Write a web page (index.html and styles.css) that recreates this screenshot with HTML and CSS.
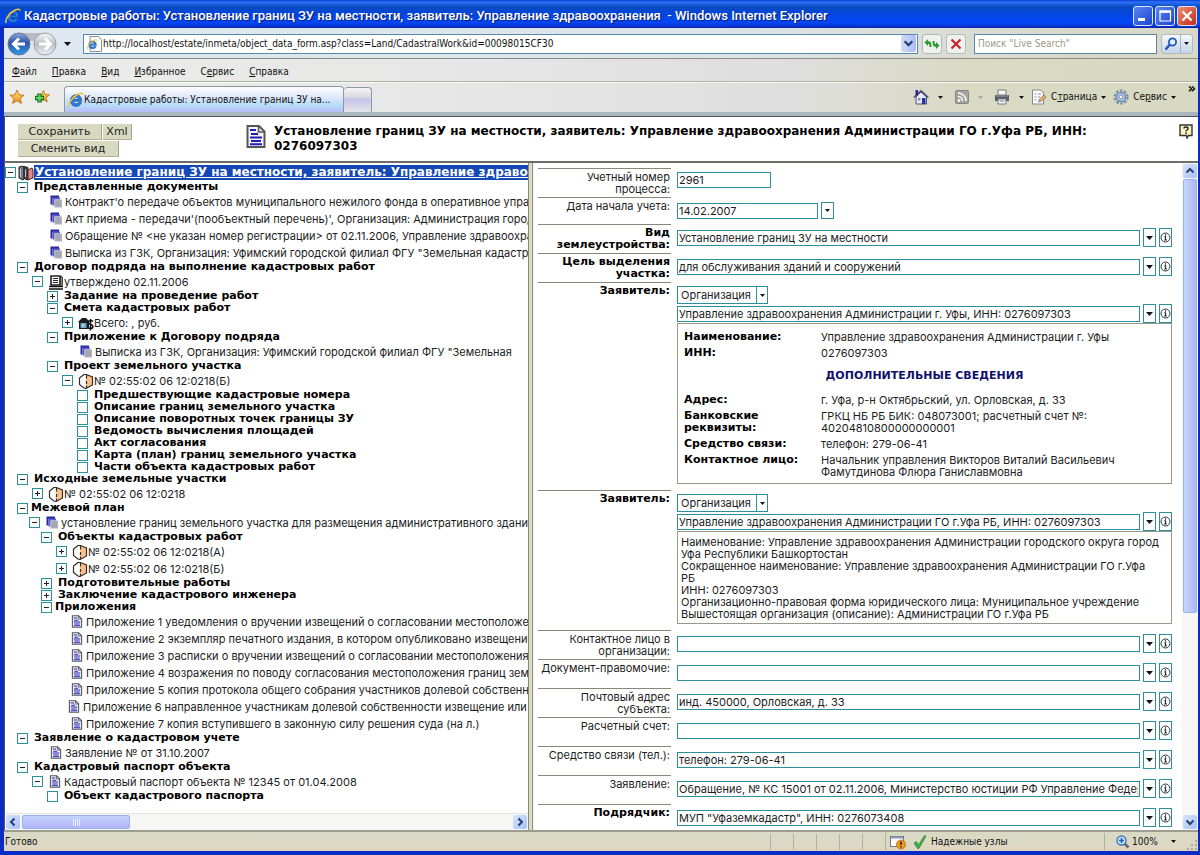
FILE: index.html
```html
<!DOCTYPE html>
<html lang="ru">
<head>
<meta charset="utf-8">
<title>Кадастровые работы</title>
<link rel="stylesheet" href="styles.css">
</head>
<body>
<svg class="defs" aria-hidden="true">
  <defs>
    <linearGradient id="gBlue" x1="0" y1="0" x2="0" y2="1"><stop offset="0" stop-color="#8fa6d8"/><stop offset=".45" stop-color="#2c54a8"/><stop offset="1" stop-color="#2f9bea"/></linearGradient>
    <linearGradient id="gGrey" x1="0" y1="0" x2="0" y2="1"><stop offset="0" stop-color="#fafafa"/><stop offset=".5" stop-color="#b9bcc2"/><stop offset="1" stop-color="#f0f2f6"/></linearGradient>
    <linearGradient id="gStar" x1="0" y1="0" x2="0" y2="1"><stop offset="0" stop-color="#ffe36a"/><stop offset="1" stop-color="#f08a1c"/></linearGradient>
  </defs>
  <symbol id="ie" viewBox="0 0 16 16"><path d="M13.6 9.2H5.4c.1 1.700 1.200 2.600 2.800 2.600 1.100 0 1.900-.4 2.400-1.200h2.800c-.8 2.400-2.700 3.700-5.300 3.700-3.400 0-5.700-2.300-5.700-5.700s2.400-5.800 5.700-5.800c3.500 0 5.700 2.400 5.500 6.400zM5.500 7.200h5.200C10.500 5.700 9.500 5 8.100 5S5.700 5.800 5.500 7.200z" fill="#2a84dc" stroke="#164f9c" stroke-width=".8"/><path d="M1.300 15C-.4 12.500 3.500 6 8.500 3c3.500-2.200 6.500-2.500 6.300-.3" fill="none" stroke="#f3c33a" stroke-width="1.500"/></symbol>
  <symbol id="docs" viewBox="0 0 12 12"><path d="M.5 0H9v2.500H2.500V9H.5z" fill="#2a2a9e"/><path d="M2.500 2H10v2H4.500v6h-2z" fill="#5a5ad0"/><rect x="4.500" y="4" width="7.500" height="8" fill="#b4b4c4"/><rect x="5.500" y="5" width="5.500" height="6" fill="#a6a6ae"/></symbol>
  <symbol id="page" viewBox="0 0 20 24"><path d="M1.500 1.500H13L18.500 7v15.500h-17z" fill="#f2f2fa" stroke="#55555c" stroke-width="2"/><path d="M12.500 1v6.500H19" fill="none" stroke="#55555c" stroke-width="1.600"/><path d="M4 5.500h6M5 9.500h7M4 13h12M5 16.500h10M4 19.800h12" stroke="#2020a8" stroke-width="1.900"/></symbol>
  <symbol id="parcel" viewBox="0 0 16 16"><path d="M8 1.500L14 4v8l-6 3z" fill="#f8c08a"/><path d="M6 1.500L1.500 5v6.500L6 15l2 .5L14.500 12V4L8.500 1.500z" fill="none" stroke="#3a2a28" stroke-width="1.200"/><path d="M8.500 2v3.500M8.500 8v3M8.500 12.500V15" stroke="#3a2a28" stroke-width="1.200"/></symbol>
  <symbol id="minus" viewBox="0 0 11 11"><rect x=".5" y=".5" width="10" height="10" fill="#fff" stroke="#2c8f9c"/><path d="M3 5.500h5" stroke="#222"/></symbol>
  <symbol id="plus" viewBox="0 0 11 11"><rect x=".5" y=".5" width="10" height="10" fill="#fff" stroke="#2c8f9c"/><path d="M3 5.500h5M5.500 3v5" stroke="#222"/></symbol>
  <symbol id="empty" viewBox="0 0 11 11"><rect x=".5" y=".5" width="10" height="10" fill="#fff" stroke="#2c8f9c"/></symbol>
  <symbol id="tri" viewBox="0 0 7 4"><path d="M0 0h7L3.500 4z" fill="#111"/></symbol>
  <symbol id="info" viewBox="0 0 11 11"><circle cx="5.500" cy="5.500" r="4.500" fill="#fff" stroke="#333"/><path d="M5.500 2.300v1.400M4.400 4.900h1.200v3M4.200 8h2.700" fill="none" stroke="#222" stroke-width="1.100"/></symbol>
</svg>

<div class="window">
  <header class="titlebar">
    <svg class="i16"><use href="#ie"/></svg>
    <h1>Кадастровые работы: Установление границ ЗУ на местности, заявитель: Управление здравоохранения&nbsp; - Windows Internet Explorer</h1>
    <div class="winbtns">
      <button class="wb" aria-label="Свернуть"><svg viewBox="0 0 18 18"><path d="M4 12.500h7" stroke="#fff" stroke-width="3"/></svg></button>
      <button class="wb" aria-label="Развернуть"><svg viewBox="0 0 18 18"><path d="M4 5h10.500v9H4z" fill="none" stroke="#fff" stroke-width="1.200"/><path d="M3.500 4.500h11.500" stroke="#fff" stroke-width="2.500"/></svg></button>
      <button class="wb close" aria-label="Закрыть"><svg viewBox="0 0 18 18"><path d="M4.500 4.500l9 9M13.500 4.500l-9 9" stroke="#fff" stroke-width="2.400"/></svg></button>
    </div>
  </header>

  <div class="frame">
    <div class="chrome">
      <div class="navbar">
        <svg class="backfwd" viewBox="0 0 52 26"><path d="M12 2h28v8H12z" fill="#b8bcc6"/><circle cx="12" cy="13" r="11" fill="url(#gBlue)" stroke="#6b7894"/><circle cx="38" cy="13" r="11" fill="url(#gGrey)" stroke="#9a9ea8"/><path d="M12 7.500L6.500 13l5.500 5.500M7 13h11" fill="none" stroke="#fff" stroke-width="3"/><path d="M38 7.500l5.500 5.500-5.500 5.500M43 13H32" fill="none" stroke="#fff" stroke-width="3"/></svg>
        <svg class="tri"><use href="#tri"/></svg>
        <div class="address">
          <svg class="i16" viewBox="0 0 16 16"><path d="M3 .5h8.500L14.500 4v11.500H3z" fill="#fff" stroke="#8a8f9c"/><use href="#ie" x="0" y="3" width="11" height="11"/></svg>
          <input type="text" aria-label="Адрес" value="http://localhost/estate/inmeta/object_data_form.asp?class=Land/CadastralWork&amp;id=00098015CF30">
          <button class="drop" aria-label="Список адресов"><svg viewBox="0 0 10 10"><path d="M1.500 3L5 6.500 8.500 3" fill="none" stroke="#23407a" stroke-width="2"/></svg></button>
        </div>
        <button class="sq" aria-label="Обновить"><svg viewBox="0 0 16 16"><path d="M.5 6.500L4 3v2.200C6.500 5 7.500 6.500 7.500 11h-2C5.500 8.500 5.300 7.800 4 7.800V10zM15.500 9.500L12 13v-2.200C9.500 11 8.500 9.500 8.500 5h2c0 2.500.2 3.200 1.500 3.200V6z" fill="#2c9a34"/></svg></button>
        <button class="sq" aria-label="Остановить"><svg viewBox="0 0 16 16"><path d="M3.500 3.500l9 9M12.500 3.500l-9 9" stroke="#c8262c" stroke-width="2.200"/></svg></button>
        <input class="search" type="text" aria-label="Поиск" placeholder="Поиск &quot;Live Search&quot;">
        <div class="find">
          <button aria-label="Найти"><svg class="i14" viewBox="0 0 14 14"><circle cx="8.500" cy="5" r="3.600" fill="#dff0ff" stroke="#2456b8" stroke-width="1.800"/><path d="M6 7.500L1.500 12.500" stroke="#2456b8" stroke-width="2.600"/></svg></button>
          <button class="more" aria-label="Параметры поиска"><svg class="tri5"><use href="#tri"/></svg></button>
        </div>
      </div>
      <nav class="menubar">
        <a href="#"><u>Ф</u>айл</a><a href="#"><u>П</u>равка</a><a href="#"><u>В</u>ид</a><a href="#"><u>И</u>збранное</a><a href="#">С<u>е</u>рвис</a><a href="#"><u>С</u>правка</a>
      </nav>
      <div class="tabbar">
        <svg class="i16 fav" viewBox="0 0 16 16"><path d="M8 1l2 4.800 5 .4-3.800 3.300 1.200 5L8 11.800 3.600 14.500l1.200-5L1 6.200l5-.4z" fill="url(#gStar)" stroke="#b56a14" stroke-width=".8"/></svg>
        <svg class="i16 fav2" viewBox="0 0 16 16"><path d="M9.500 1.500l1.700 4 4.300.3-3.300 2.800 1 4.300-3.700-2.300L5.800 13l1-4.400L3.600 5.800l4.200-.3z" fill="url(#gStar)" stroke="#b56a14" stroke-width=".8"/><path d="M5.500 4.500v9M1 9h9" stroke="#187020" stroke-width="4.400"/><path d="M5.500 5.500v7M2 9h7" stroke="#66d35a" stroke-width="2.200"/></svg>
        <div class="tab"><svg class="i16"><use href="#ie"/></svg><span>Кадастровые работы: Установление границ ЗУ на...</span></div>
        <div class="newtab"></div>
        <div class="cmds">
          <button class="g1" aria-label="Домой"><svg class="i16" viewBox="0 0 16 16"><path d="M3 8v7h10.500V8L8 3z" fill="#e8e8f4" stroke="#50506c"/><path d="M.8 8.500L8 1.800l7.300 6.700" fill="none" stroke="#4a4a80" stroke-width="1.600"/><path d="M2.500 1h2.500v4l-2.500 2z" fill="#26268a"/><path d="M9 9h3.500v6H9z" fill="#2430a8"/><path d="M5 9h2.500v2.500H5z" fill="#8888a0"/></svg><svg class="tri5"><use href="#tri"/></svg></button>
          <button class="g2" aria-label="Веб-каналы"><svg class="i14" viewBox="0 0 14 14"><rect x=".5" y=".5" width="13" height="13" rx="1.500" fill="#a4a4a0" stroke="#868682"/><circle cx="4" cy="10.500" r="1.300" fill="#fff"/><path d="M3 6.500a4.500 4.500 0 0 1 4.500 4.500M3 3a8 8 0 0 1 8 8" fill="none" stroke="#fff" stroke-width="1.400"/></svg><svg class="tri5 dim"><use href="#tri"/></svg></button>
          <button class="g3" aria-label="Печать"><svg class="i16" viewBox="0 0 16 16"><path d="M4 1h8v5H4z" fill="#fafafa" stroke="#777"/><path d="M1 6h14v6H1z" fill="#5c5e64"/><path d="M2 7h12" stroke="#9a9ca4"/><path d="M4 10h8v5H4z" fill="#fff" stroke="#777"/><path d="M5.500 12h5" stroke="#4878c0"/></svg><svg class="tri5"><use href="#tri"/></svg></button>
          <button class="g4"><svg class="i16" viewBox="0 0 16 16"><path d="M1.500 1h8l3 3v11h-11z" fill="#fff" stroke="#85858c"/><path d="M3.500 5h2M3.500 8h2M3.500 11h2M7 5h3M7 8h2" stroke="#7888b0"/><path d="M7.500 13l1-3 4.500-4 2 2-4.500 4z" fill="#f0b070" stroke="#7a5a48" stroke-width=".7"/></svg><span>С<u>т</u>раница</span><svg class="tri5"><use href="#tri"/></svg></button>
          <button class="g5"><svg class="i16" viewBox="0 0 16 16"><circle cx="8" cy="8" r="6.500" fill="none" stroke="#7c90ac" stroke-width="2.200" stroke-dasharray="2.600 1.500"/><circle cx="8" cy="8" r="4.500" fill="#b4d4f4" stroke="#6e86a8" stroke-width="1.400"/><circle cx="8" cy="8" r="2" fill="#f2f4f0" stroke="#6e86a8"/></svg><span>Се<u>р</u>вис</span><svg class="tri5"><use href="#tri"/></svg></button>
          <b class="chev">»</b>
        </div>
      </div>
    </div>

    <div class="pagehead">
      <div class="actions"><div class="arow"><button class="w1">Сохранить</button><button class="w2">Xml</button></div><div class="arow"><button class="w3">Сменить вид</button></div></div>
      <svg class="bigdoc"><use href="#page"/></svg>
      <h2>Установление границ ЗУ на местности, заявитель: Управление здравоохранения Администрации ГО г.Уфа РБ, ИНН: 0276097303</h2>
      <svg class="i14 help" viewBox="0 0 14 15"><path d="M1 1h12v10.500H9.500L8 14l-.5-2.500H1z" fill="#fbf6c0" stroke="#333" stroke-width="1.400"/><path d="M5 4.500C5 2.500 9 2.500 9 4.500 9 6 7 6 7 7.500M7 8.600v1.500" fill="none" stroke="#222" stroke-width="1.500"/></svg>
    </div>

    <div class="panes">
      <section class="left">
        <div class="tree">
          <div class="row root"><svg class="bx"><use href="#minus"/></svg><svg class="i16" viewBox="0 0 16 16"><path d="M1 2l4-1 1 1v12l-1 1-4-2z" fill="#7a7a84" stroke="#222"/><path d="M6 1.500l4 1V15l-4-1.500z" fill="#44444e" stroke="#222"/><path d="M10 5l4-2 1 2v8l-5 2z" fill="#e88a84" stroke="#4a2222"/><path d="M2.500 4v8M7.500 4.500V12" stroke="#c8c8d4"/></svg><a class="sel" href="#">Установление границ ЗУ на местности, заявитель: Управление здравоохранения</a></div>
          <ul class="first">
            <li><div class="row b"><svg class="bx"><use href="#minus"/></svg><span>Представленные документы</span></div>
              <ul>
                <li class="row t"><svg class="ic leaf"><use href="#docs"/></svg><span>Контракт'о передаче объектов муниципального нежилого фонда в оперативное управление</span></li>
                <li class="row t"><svg class="ic leaf"><use href="#docs"/></svg><span>Акт приема - передачи'(пообъектный перечень)', Организация: Администрация города</span></li>
                <li class="row t"><svg class="ic leaf"><use href="#docs"/></svg><span>Обращение № &lt;не указан номер регистрации&gt; от 02.11.2006, Управление здравоохранения</span></li>
                <li class="row t"><svg class="ic leaf"><use href="#docs"/></svg><span>Выписка из ГЗК, Организация: Уфимский городской филиал ФГУ "Земельная кадастровая</span></li>
              </ul></li>
            <li><div class="row b"><svg class="bx"><use href="#minus"/></svg><span>Договор подряда на выполнение кадастровых работ</span></div>
              <ul>
                <li><div class="row t"><svg class="bx"><use href="#minus"/></svg><svg class="i16" viewBox="0 0 16 16"><path d="M3 2h9v9H3z" fill="#fff" stroke="#222" stroke-width="1.600"/><path d="M5 4.500h5M5 6.500h5M5 8.500h5" stroke="#222"/><path d="M1 12.500h14M1 15h14" stroke="#111" stroke-width="1.500"/><path d="M13 2l1.500 1v8L13 12z" fill="#d8c880" stroke="#222" stroke-width=".8"/></svg><span>утверждено 02.11.2006</span></div>
                  <ul>
                    <li class="row b"><svg class="bx"><use href="#plus"/></svg><span>Задание на проведение работ</span></li>
                    <li><div class="row b"><svg class="bx"><use href="#minus"/></svg><span>Смета кадастровых работ</span></div>
                      <ul><li class="row t"><svg class="bx"><use href="#plus"/></svg><svg class="i16" viewBox="0 0 16 16"><path d="M0 7l4-4h4l3 3v8H1V7z" fill="#1c1c24"/><path d="M2.500 8h6v5h-6z" fill="#6ea8c8"/><path d="M5 9v3" stroke="#fff"/><path d="M15 6.500c-1.500-1.500-5-1-5 1s5 1.500 5 4-4 2.500-5.500 1M12.500 4v11.500" fill="none" stroke="#111" stroke-width="1.500"/></svg><span>Всего: , руб.</span></li></ul></li>
                    <li><div class="row b"><svg class="bx"><use href="#minus"/></svg><span>Приложение к Договору подряда</span></div>
                      <ul><li class="row t"><svg class="ic leaf"><use href="#docs"/></svg><span>Выписка из ГЗК, Организация: Уфимский городской филиал ФГУ "Земельная</span></li></ul></li>
                    <li><div class="row b"><svg class="bx"><use href="#minus"/></svg><span>Проект земельного участка</span></div>
                      <ul><li><div class="row t"><svg class="bx"><use href="#minus"/></svg><svg class="i16"><use href="#parcel"/></svg><span>№ 02:55:02 06 12:0218(Б)</span></div>
                        <ul>
                          <li class="row b"><svg class="bx"><use href="#empty"/></svg><span>Предшествующие кадастровые номера</span></li>
                          <li class="row b"><svg class="bx"><use href="#empty"/></svg><span>Описание границ земельного участка</span></li>
                          <li class="row b"><svg class="bx"><use href="#empty"/></svg><span>Описание поворотных точек границы ЗУ</span></li>
                          <li class="row b"><svg class="bx"><use href="#empty"/></svg><span>Ведомость вычисления площадей</span></li>
                          <li class="row b"><svg class="bx"><use href="#empty"/></svg><span>Акт согласования</span></li>
                          <li class="row b"><svg class="bx"><use href="#empty"/></svg><span>Карта (план) границ земельного участка</span></li>
                          <li class="row b"><svg class="bx"><use href="#empty"/></svg><span>Части объекта кадастровых работ</span></li>
                        </ul></li></ul></li>
                  </ul></li>
              </ul></li>
            <li><div class="row b"><svg class="bx"><use href="#minus"/></svg><span>Исходные земельные участки</span></div>
              <ul><li class="row t"><svg class="bx"><use href="#plus"/></svg><svg class="i16"><use href="#parcel"/></svg><span>№ 02:55:02 06 12:0218</span></li></ul></li>
            <li><div class="row b near"><svg class="bx"><use href="#minus"/></svg><span>Межевой план</span></div>
              <ul class="tight">
                <li><div class="row t"><svg class="bx"><use href="#minus"/></svg><svg class="ic"><use href="#docs"/></svg><span>установление границ земельного участка для размещения административного здания</span></div>
                  <ul class="tight">
                    <li><div class="row b"><svg class="bx"><use href="#minus"/></svg><span>Объекты кадастровых работ</span></div>
                      <ul>
                        <li class="row t"><svg class="bx"><use href="#plus"/></svg><svg class="i16"><use href="#parcel"/></svg><span>№ 02:55:02 06 12:0218(А)</span></li>
                        <li class="row t"><svg class="bx"><use href="#plus"/></svg><svg class="i16"><use href="#parcel"/></svg><span>№ 02:55:02 06 12:0218(Б)</span></li>
                      </ul></li>
                    <li class="row b"><svg class="bx"><use href="#plus"/></svg><span>Подготовительные работы</span></li>
                    <li class="row b"><svg class="bx"><use href="#plus"/></svg><span>Заключение кадастрового инженера</span></li>
                    <li><div class="row b near"><svg class="bx"><use href="#minus"/></svg><span>Приложения</span></div>
                      <ul class="tight">
                        <li class="row t"><svg class="ic leaf"><use href="#page"/></svg><span>Приложение 1 уведомления о вручении извещений о согласовании местоположения</span></li>
                        <li class="row t"><svg class="ic leaf"><use href="#page"/></svg><span>Приложение 2 экземпляр печатного издания, в котором опубликовано извещение</span></li>
                        <li class="row t"><svg class="ic leaf"><use href="#page"/></svg><span>Приложение 3 расписки о вручении извещений о согласовании местоположения</span></li>
                        <li class="row t"><svg class="ic leaf"><use href="#page"/></svg><span>Приложение 4 возражения по поводу согласования местоположения границ земельного</span></li>
                        <li class="row t"><svg class="ic leaf"><use href="#page"/></svg><span>Приложение 5 копия протокола общего собрания участников долевой собственности</span></li>
                        <li class="row t out"><svg class="ic leaf"><use href="#page"/></svg><span>Приложение 6 направленное участникам долевой собственности извещение или</span></li>
                        <li class="row t"><svg class="ic leaf"><use href="#page"/></svg><span>Приложение 7 копия вступившего в законную силу решения суда (на л.)</span></li>
                      </ul></li>
                  </ul></li>
              </ul></li>
            <li><div class="row b"><svg class="bx"><use href="#minus"/></svg><span>Заявление о кадастровом учете</span></div>
              <ul><li class="row t"><svg class="ic leaf"><use href="#page"/></svg><span>Заявление № от 31.10.2007</span></li></ul></li>
            <li><div class="row b"><svg class="bx"><use href="#minus"/></svg><span>Кадастровый паспорт объекта</span></div>
              <ul><li><div class="row t"><svg class="bx"><use href="#minus"/></svg><svg class="ic"><use href="#page"/></svg><span>Кадастровый паспорт объекта № 12345 от 01.04.2008</span></div>
                <ul><li class="row b"><svg class="bx"><use href="#empty"/></svg><span>Объект кадастрового паспорта</span></li></ul></li></ul></li>
          </ul>
        </div>
        <div class="hscroll">
          <button aria-label="Влево"><svg viewBox="0 0 10 10"><path d="M6.500 1.500L3 5l3.500 3.500" fill="none" stroke="#23407a" stroke-width="2"/></svg></button>
          <div class="hthumb"><i></i><i></i><i></i><i></i></div>
          <div class="space"></div>
          <button aria-label="Вправо"><svg viewBox="0 0 10 10"><path d="M3.500 1.500L7 5 3.500 8.500" fill="none" stroke="#23407a" stroke-width="2"/></svg></button>
        </div>
      </section>
      <div class="splitter"></div>
      <section class="right">
        <form class="form">
          <div class="frow"><label for="f1">Учетный номер процесса:</label><div class="val"><input class="num" id="f1" value="2961"></div></div>
          <div class="frow short"><label for="f2">Дата начала учета:</label><div class="val line"><input class="date" id="f2" value="14.02.2007"><button type="button" class="cb sm" aria-label="Календарь"><svg class="tri5"><use href="#tri"/></svg></button></div></div>
          <div class="frow"><label class="req" for="f3">Вид землеустройства:</label><div class="val line"><input id="f3" value="Установление границ ЗУ на местности"><button type="button" class="cb" aria-label="Выбрать"><svg class="tri"><use href="#tri"/></svg></button><button type="button" class="cb" aria-label="Сведения"><svg class="inf"><use href="#info"/></svg></button></div></div>
          <div class="frow"><label class="req" for="f4">Цель выделения участка:</label><div class="val line"><input id="f4" value="для обслуживания зданий и сооружений"><button type="button" class="cb" aria-label="Выбрать"><svg class="tri"><use href="#tri"/></svg></button><button type="button" class="cb" aria-label="Сведения"><svg class="inf"><use href="#info"/></svg></button></div></div>
          <div class="frow"><label class="req" for="f5">Заявитель:</label><div class="val">
            <div class="pick"><select id="f5"><option>Организация</option></select><span><svg class="tri5"><use href="#tri"/></svg></span></div>
            <div class="line"><input aria-label="Организация" value="Управление здравоохранения Администрации г. Уфы, ИНН: 0276097303"><button type="button" class="cb" aria-label="Выбрать"><svg class="tri"><use href="#tri"/></svg></button><button type="button" class="cb" aria-label="Сведения"><svg class="inf"><use href="#info"/></svg></button></div>
            <div class="card"><table>
              <tr><th>Наименование:</th><td>Управление здравоохранения Администрации г. Уфы</td></tr>
              <tr><th>ИНН:</th><td>0276097303</td></tr>
              <tr><td class="sub" colspan="2">ДОПОЛНИТЕЛЬНЫЕ СВЕДЕНИЯ</td></tr>
              <tr><th>Адрес:</th><td>г. Уфа, р-н Октябрьский, ул. Орловская, д. 33</td></tr>
              <tr><th>Банковские<br>реквизиты:</th><td>ГРКЦ НБ РБ БИК: 048073001; расчетный счет №:<br>40204810800000000001</td></tr>
              <tr><th>Средство связи:</th><td>телефон: 279-06-41</td></tr>
              <tr><th>Контактное лицо:</th><td>Начальник управления Викторов Виталий Васильевич<br>Фамутдинова Флюра Ганиславмовна</td></tr>
            </table></div></div></div>
          <div class="frow"><label class="req" for="f6">Заявитель:</label><div class="val">
            <div class="pick"><select id="f6"><option>Организация</option></select><span><svg class="tri5"><use href="#tri"/></svg></span></div>
            <div class="line"><input aria-label="Организация" value="Управление здравоохранения Администрации ГО г.Уфа РБ, ИНН: 0276097303"><button type="button" class="cb" aria-label="Выбрать"><svg class="tri"><use href="#tri"/></svg></button><button type="button" class="cb" aria-label="Сведения"><svg class="inf"><use href="#info"/></svg></button></div>
            <div class="card text">Наименование: Управление здравоохранения Администрации городского округа город<br>Уфа Республики Башкортостан<br>Сокращенное наименование: Управление здравоохранения Администрации ГО г.Уфа<br>РБ<br>ИНН: 0276097303<br>Организационно-правовая форма юридического лица: Муниципальное учреждение<br>Вышестоящая организация (описание): Администрации ГО г.Уфа РБ</div></div></div>
          <div class="frow"><label for="f7">Контактное лицо в организации:</label><div class="val line"><input id="f7"><button type="button" class="cb" aria-label="Выбрать"><svg class="tri"><use href="#tri"/></svg></button><button type="button" class="cb" aria-label="Сведения"><svg class="inf"><use href="#info"/></svg></button></div></div>
          <div class="frow"><label for="f8">Документ-правомочие:</label><div class="val line"><input id="f8"><button type="button" class="cb" aria-label="Выбрать"><svg class="tri"><use href="#tri"/></svg></button><button type="button" class="cb" aria-label="Сведения"><svg class="inf"><use href="#info"/></svg></button></div></div>
          <div class="frow"><label for="f9">Почтовый адрес субъекта:</label><div class="val line"><input id="f9" value="инд. 450000, Орловская, д. 33"><button type="button" class="cb" aria-label="Выбрать"><svg class="tri"><use href="#tri"/></svg></button><button type="button" class="cb" aria-label="Сведения"><svg class="inf"><use href="#info"/></svg></button></div></div>
          <div class="frow"><label for="f10">Расчетный счет:</label><div class="val line"><input id="f10"><button type="button" class="cb" aria-label="Выбрать"><svg class="tri"><use href="#tri"/></svg></button><button type="button" class="cb" aria-label="Сведения"><svg class="inf"><use href="#info"/></svg></button></div></div>
          <div class="frow"><label for="f11">Средство связи (тел.):</label><div class="val line"><input id="f11" value="телефон: 279-06-41"><button type="button" class="cb" aria-label="Выбрать"><svg class="tri"><use href="#tri"/></svg></button><button type="button" class="cb" aria-label="Сведения"><svg class="inf"><use href="#info"/></svg></button></div></div>
          <div class="frow"><label for="f12">Заявление:</label><div class="val line"><input id="f12" value="Обращение, № КС 15001 от 02.11.2006, Министерство юстиции РФ Управление Федеральной"><button type="button" class="cb" aria-label="Выбрать"><svg class="tri"><use href="#tri"/></svg></button><button type="button" class="cb" aria-label="Сведения"><svg class="inf"><use href="#info"/></svg></button></div></div>
          <div class="frow"><label class="req" for="f13">Подрядчик:</label><div class="val line"><input id="f13" value="МУП &quot;Уфаземкадастр&quot;, ИНН: 0276073408"><button type="button" class="cb" aria-label="Выбрать"><svg class="tri"><use href="#tri"/></svg></button><button type="button" class="cb" aria-label="Сведения"><svg class="inf"><use href="#info"/></svg></button></div></div>
        </form>
        <div class="vscroll">
          <button aria-label="Вверх"><svg viewBox="0 0 10 10"><path d="M1.500 6.500L5 3l3.500 3.500" fill="none" stroke="#23407a" stroke-width="2"/></svg></button>
          <div class="vthumb"></div>
          <div class="space"></div>
          <button aria-label="Вниз"><svg viewBox="0 0 10 10"><path d="M1.500 3.500L5 7l3.500-3.500" fill="none" stroke="#23407a" stroke-width="2"/></svg></button>
        </div>
      </section>
    </div>

    <footer class="status">
      <span class="ready">Готово</span>
      <i></i><i></i><i></i><i></i><i></i>
      <div class="cell warn"><svg class="i16" viewBox="0 0 16 16"><rect x=".5" y="2.500" width="13" height="10" fill="#fff" stroke="#777"/><path d="M1 3.500h12" stroke="#8a9ac0" stroke-width="2"/><circle cx="11" cy="10.500" r="4.500" fill="#f49a1c" stroke="#a8600c" stroke-width=".7"/><path d="M11 7.500v3.600M11 12.200v1.300" stroke="#222" stroke-width="1.600"/></svg></div>
      <div class="cell zone"><svg class="i14" viewBox="0 0 14 14"><path d="M1 8l2.500-1.500L5.500 10 11.500.5 13 1 6 13.500H4.500z" fill="#3cb043" stroke="#237c2c" stroke-width=".6"/></svg><span>Надежные узлы</span></div>
      <div class="cell zoom"><svg class="i14" viewBox="0 0 14 14"><path d="M8 8l4.500 4.500" stroke="#6a6a78" stroke-width="2.600"/><circle cx="5.500" cy="5.500" r="4.500" fill="#cfe6fb" stroke="#3878c0" stroke-width="1.400"/><path d="M5.500 3v5M3 5.500h5" stroke="#2060b0" stroke-width="1.600"/></svg><span>100%</span><svg class="tri5"><use href="#tri"/></svg></div>
      <svg class="grip" viewBox="0 0 12 12"><path d="M9 1h2v2H9zM9 5h2v2H9zM9 9h2v2H9zM5 5h2v2H5zM5 9h2v2H5zM1 9h2v2H1z" fill="#a8aaa0"/></svg>
    </footer>
  </div>
</div>
</body>
</html>
```
FILE: styles.css
```css
* { box-sizing: border-box; }
body { margin: 0; font: 11px/12px Inter, Verdana, sans-serif; color: #1c1c1c; }
.defs { position: absolute; width: 0; height: 0; }
svg { display: block; flex: none; }
button { margin: 0; padding: 0; border: 0; background: none; font: inherit; color: inherit; }
input, select { font: inherit; color: inherit; margin: 0; min-width: 0; outline: 0; border-radius: 0; }
ul { list-style: none; margin: 0; padding: 0; }
h1, h2 { margin: 0; }
.i16 { width: 16px; height: 16px; }
.i14 { width: 14px; height: 14px; }
.tri { width: 7px; height: 4px; }
.tri5 { width: 5px; height: 3px; }
.dim { opacity: .25; }

.window { display: flex; flex-direction: column; height: 100vh; overflow: hidden; background: #0a2bc4; }
.titlebar { display: flex; align-items: center; gap: 3px; height: 28px; padding: 4px 3px 0 5px; background: linear-gradient(#0a3bd0 0, #2a72f8 2px, #0a4ac0 7px, #0346e0 14px, #0448f8 22px, #0838d8 26px, #0a20a0 28px); color: #fff; }
.titlebar h1 { flex: 1; overflow: hidden; white-space: nowrap; font: 500 13px/18px Roboto, Tahoma, sans-serif; text-shadow: 1px 1px 1px #0a1c70; }
.winbtns { display: flex; gap: 2px; }
.wb { width: 20px; height: 20px; border: 1px solid #dfe6fa; border-radius: 3px; background: linear-gradient(135deg, #5a86f0, #1c44d0); }
.wb.close { background: linear-gradient(135deg, #f09070, #c4281c); }

.frame { flex: 1; display: flex; flex-direction: column; min-height: 0; margin: 0 2px 4px 4px; background: #fff; }
.chrome { background: linear-gradient(90deg, #ececea 0, #e6e6e6 40%, #dedede 66%, #d9dac4 80%, #d8d9c2); font-family: "DejaVu Sans Condensed", Tahoma, sans-serif; font-size: 10px; color: #111; border-bottom: 1px solid #4c5058; }
.navbar { display: flex; align-items: center; height: 31px; padding: 1px 5px 0 3px; background: linear-gradient(90deg, #dfe8f0, #dce4ea 60%, #d8d9c8 90%); border-bottom: 1px solid #8c8c80; }
.backfwd { width: 52px; height: 26px; }
.navbar > .tri { margin: 0 12px 0 5px; }
.address { flex: 1; display: flex; align-items: center; height: 20px; padding-left: 3px; background: #fff; border: 1px solid #5d86ac; }
.address input { flex: 1; border: 0; background: none; padding: 0; }
.drop { width: 15px; height: 17px; padding: 2px; margin-right: 1px; background: linear-gradient(90deg, #cfdcfc, #a8bcf4); border-radius: 2px; }
.sq { width: 20px; height: 20px; padding: 1px; margin-left: 4px; border: 1px solid #b4b8bc; border-radius: 3px; background: #f0f0ec; }
.search { width: 183px; height: 20px; margin-left: 8px; padding: 0 3px; border: 1px solid #5d86ac; background: #fff; }
.search::placeholder { color: #9a9a88; opacity: 1; }
.find { display: flex; width: 32px; height: 20px; margin-left: 4px; border: 1px solid #b4b8bc; border-radius: 3px; background: linear-gradient(#f4f8fc, #c4d4ea); }
.find button { flex: 1; display: grid; place-items: center; }
.find .more { flex: 0 0 12px; border-left: 1px solid #a8b4c4; }

.menubar { display: flex; align-items: center; gap: 15px; height: 23px; padding: 3px 0 0 8px; border-bottom: 1px solid #b2b2a4; }
.menubar a { color: inherit; text-decoration: none; }
.tabbar { display: flex; align-items: flex-end; height: 34px; border-top: 1px solid #f8f8f4; border-bottom: 4px solid #a9b6bd; }
.fav { margin: 0 9px 7px 5px; }
.fav2 { margin-bottom: 7px; }
.tab { display: flex; align-items: center; width: 280px; height: 26px; margin-left: 14px; padding-left: 3px; overflow: hidden; white-space: nowrap; border: 1px solid #8d98a4; border-bottom: 0; border-radius: 4px 4px 0 0; background: linear-gradient(#fdfdff, #dfe8fa 40%, #b4dcf8 75%, #b8bcfa); }
.newtab { width: 28px; height: 25px; border: 1px solid #8d98a4; border-width: 1px 1px 0 0; border-radius: 4px 4px 0 0; background: linear-gradient(#f6f6f6, #d8d8e0 40%, #c4c4ea 45%, #e4e4e8); }
.cmds { display: flex; flex: 1; justify-content: flex-end; align-items: center; height: 30px; }
.cmds button { display: flex; align-items: center; gap: 3px; }
.cmds .g1, .cmds .g2, .cmds .g3 { gap: 9px; }
.cmds .g1 { margin-right: 12px; }
.cmds .g2 { margin-right: 11px; }
.cmds .g3, .cmds .g4 { margin-right: 7px; }
.cmds .g4, .cmds .g5 { gap: 4px; }
.chev { align-self: flex-start; margin: 0 2px 0 12px; font-size: 14px; color: #000; }

.pagehead { display: flex; align-items: flex-start; padding: 7px 5px 4px 13px; border-bottom: 2px solid #6c6c68; border-left: 1px solid #555; color: #000; font-family: "DejaVu Sans", Verdana, sans-serif; }
.actions { display: grid; gap: 1px; width: 228px; color: #222; }
.arow { display: flex; gap: 1px; }
.actions button { height: 16px; font-size: 11px; background: #d8d9c0; border-right: 1px solid #a4a48c; border-bottom: 1px solid #b0b098; }
.actions .w1 { width: 84px; }
.actions .w2 { width: 29px; }
.actions .w3 { width: 101px; }
.bigdoc { width: 20px; height: 25px; margin-right: 8px; }
.pagehead h2 { flex: 1; font-size: 12px; line-height: 15px; }
.pagehead .help { height: 15px; margin-left: 56px; }

.panes { flex: 1; display: flex; min-height: 0; border-left: 1px solid #555; }
.left { flex: 0 0 523px; display: flex; flex-direction: column; min-width: 0; }
.tree { flex: 1; min-height: 0; overflow: hidden; padding-top: 1px; }
.row { display: flex; align-items: center; white-space: nowrap; height: 17px; }
.bx { width: 11px; height: 11px; }
.ic { width: 12px; height: 13px; margin: 0 3px 0 1px; }
.leaf { margin-left: 18px; }
.row.b { height: 12px; font-weight: bold; font-family: "DejaVu Sans", Verdana, sans-serif; color: #000; }
.row.b .bx { margin-right: 6px; }
.row.b.near .bx { margin-right: 3px; }
.row.t .bx { margin-right: 5px; }
.row.out { margin-left: -3px; }
.root .bx { margin-right: 2px; }
.sel { flex: 1; padding-left: 1px; background: #1448b4; color: #fff; font: bold 12px/15px "DejaVu Sans", Verdana, sans-serif; }
.first { padding-left: 12px; }
.first ul { padding-left: 15px; }
.first ul.tight { padding-left: 12px; }

.hscroll { display: flex; height: 17px; padding: 1px; background: #f6f6f4; border-top: 1px solid #e4e4e0; }
.hscroll button, .vscroll button { width: 14px; height: 14px; padding: 2px; background: linear-gradient(135deg, #d8e4fe, #a8c0f6); border-radius: 2px; }
.hthumb { display: flex; align-items: center; justify-content: center; gap: 1px; width: 108px; margin-left: 2px; border: 1px solid #98b0ea; border-radius: 2px; background: linear-gradient(#c4d4fc, #b4b4fa); }
.hthumb i { width: 1px; height: 7px; background: #e8eefc; }
.space { flex: 1; }
.splitter { flex: 0 0 6px; background: linear-gradient(90deg, #8a8a78 0 1px, #dcdcc8 1px 4px, #909080 4px 5px, #f4f4ec 5px); }
.right { flex: 1; display: flex; min-width: 0; overflow: hidden; }
.form { flex: 1; min-width: 0; padding: 5px 10px 0 4px; overflow: hidden; }
.frow { display: grid; grid-template-columns: 133px 1fr; column-gap: 6px; min-height: 29px; }
.frow.short { min-height: 27px; }
.frow > label { align-self: start; border-top: 1px solid #88887a; padding: 2px 1px 0 0; text-align: right; }
.req, .card th, .card .sub { font-weight: bold; font-family: "DejaVu Sans", Verdana, sans-serif; color: #000; }
.val { min-width: 0; padding-top: 4px; }
.line { display: flex; align-items: center; gap: 3px; height: 19px; }
.val.line { height: 23px; }
.form input { flex: 1; display: block; height: 16px; padding: 0 1px; border: 1px solid #2c8f9c; background: #fff; }
.form input.num { width: 94px; }
.form input.date { flex: 0 0 141px; }
.cb { display: grid; place-items: center; width: 13px; height: 19px; border: 1px solid #2c8f9c; background: #fff; }
.cb.sm { height: 17px; }
.inf { width: 11px; height: 11px; }
.pick { display: flex; width: 91px; height: 18px; border: 1px solid #2c8f9c; background: #fff; }
.pick select { flex: 1; appearance: none; border: 0; background: none; padding: 0 3px; }
.pick span { display: grid; place-items: center; width: 11px; border-left: 1px solid #2c8f9c; }
.card { margin-bottom: 6px; border: 1px solid #98988c; padding: 5px 5px 3px; }
.card.text { padding: 4px 1px 3px 3px; }
.card table { width: 100%; border-collapse: collapse; }
.card th { width: 138px; text-align: left; }
.card th, .card td { padding: 2px 0; vertical-align: top; }
.card th { padding-left: 1px; }
.card td.sub { padding: 9px 0 10px; text-align: center; color: #10106c; }
.vscroll { display: flex; flex-direction: column; width: 16px; padding: 1px; background: #f6f6f4; }
.vthumb { flex: 0 0 434px; margin: 1px 0; border: 1px solid #98b0ea; border-radius: 2px; background: linear-gradient(90deg, #c4d8fc, #b4b4fa); }

.status { display: flex; align-items: center; height: 21px; border-top: 2px solid #9c9c90; background: linear-gradient(#d8dac4, #dcd8c4 60%, #e0d4c0); font-family: "DejaVu Sans Condensed", Tahoma, sans-serif; font-size: 10px; color: #111; }
.ready { flex: 1; padding-left: 1px; }
.status i { width: 1px; height: 16px; margin-right: 22px; background: #b0b09c; }
.cell { display: flex; align-items: center; gap: 4px; height: 17px; border-left: 1px solid #b0b09c; padding-left: 4px; }
.warn { width: 28px; }
.zone { width: 191px; border-left: 0; padding-left: 0; }
.zoom { width: 82px; padding-left: 11px; gap: 2px; }
.zoom .tri5 { margin-left: 11px; }
.grip { width: 12px; height: 12px; align-self: flex-end; }
```
